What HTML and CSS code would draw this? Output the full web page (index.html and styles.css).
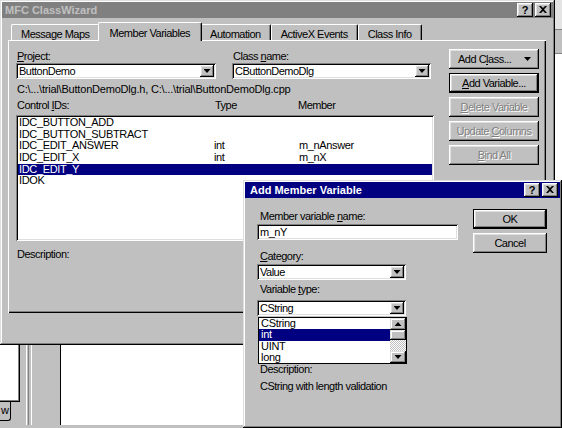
FILE: index.html
```html
<!DOCTYPE html>
<html>
<head>
<meta charset="utf-8">
<title>MFC ClassWizard</title>
<link rel="stylesheet" href="styles.css">
</head>
<body>
<div class="desktop">
  <div class="bg-right">
    <div class="bgr-top"></div>
    <div class="bgr-mid"></div>
    <div class="bgr-low"></div>
  </div>

  <div class="bg-left">
    <div class="bgl-side">
      <div class="bgl-pane"></div>
      <div class="bgl-tab">w</div>
    </div>
    <div class="bgl-rails"></div>
    <div class="bgl-canvas"></div>
  </div>

  <section class="win main-win">
    <header class="titlebar inactive">
      <span class="title">MFC ClassWizard</span>
      <span class="caption-btns">
        <span class="cbtn">?</span>
        <span class="cbtn"><svg width="8" height="7" viewBox="0 0 8 7"><path d="M0 0h2l2 2 2-2h2L5 3.5 8 7H6L4 5 2 7H0l3-3.5z" fill="#000"/></svg></span>
      </span>
    </header>
    <div class="main-body">
      <nav class="tabs">
        <span class="tab">Message Maps</span>
        <span class="tab active">Member Variables</span>
        <span class="tab">Automation</span>
        <span class="tab">ActiveX Events</span>
        <span class="tab">Class Info</span>
      </nav>
      <div class="tab-panel">
        <div class="mv-left">
          <div class="combo-row">
            <div class="field">
              <span class="lbl"><u>P</u>roject:</span>
              <div class="combo"><span class="combo-text">ButtonDemo</span><span class="drop-btn"><span class="tri-down"></span></span></div>
            </div>
            <div class="field">
              <span class="lbl">Class <u>n</u>ame:</span>
              <div class="combo"><span class="combo-text">CButtonDemoDlg</span><span class="drop-btn"><span class="tri-down"></span></span></div>
            </div>
          </div>
          <div class="path">C:\...\trial\ButtonDemoDlg.h, C:\...\trial\ButtonDemoDlg.cpp</div>
          <div class="col-head"><span>Control <u>I</u>Ds:</span><span>Type</span><span>Member</span></div>
          <div class="listbox">
            <div class="lrow"><span>IDC_BUTTON_ADD</span><span></span><span></span></div>
            <div class="lrow"><span>IDC_BUTTON_SUBTRACT</span><span></span><span></span></div>
            <div class="lrow"><span>IDC_EDIT_ANSWER</span><span>int</span><span>m_nAnswer</span></div>
            <div class="lrow"><span>IDC_EDIT_X</span><span>int</span><span>m_nX</span></div>
            <div class="lrow sel"><span>IDC_EDIT_Y</span><span></span><span></span></div>
            <div class="lrow"><span>IDOK</span><span></span><span></span></div>
          </div>
          <div class="lbl desc-lbl">Description:</div>
        </div>
        <div class="btn-col">
          <div class="btn split"><span>Add C<u>l</u>ass...</span><span class="tri-down"></span></div>
          <div class="btn default"><span><u>A</u>dd Variable...</span></div>
          <div class="btn disabled"><span><u>D</u>elete Variable</span></div>
          <div class="btn disabled"><span>Update <u>C</u>olumns</span></div>
          <div class="btn disabled"><span><u>B</u>ind All</span></div>
        </div>
      </div>
    </div>
  </section>

  <section class="win dlg-win">
    <header class="titlebar">
      <span class="title">Add Member Variable</span>
      <span class="caption-btns">
        <span class="cbtn">?</span>
        <span class="cbtn"><svg width="8" height="7" viewBox="0 0 8 7"><path d="M0 0h2l2 2 2-2h2L5 3.5 8 7H6L4 5 2 7H0l3-3.5z" fill="#000"/></svg></span>
      </span>
    </header>
    <div class="dlg-body">
      <div class="dlg-left">
        <span class="dlbl first">Member variable <u>n</u>ame:</span>
        <div class="edit">m_nY</div>
        <span class="dlbl cat"><u>C</u>ategory:</span>
        <div class="combo small cat-combo"><span class="combo-text">Value</span><span class="drop-btn"><span class="tri-down"></span></span></div>
        <span class="dlbl vt">Variable <u>t</u>ype:</span>
        <div class="combo small type-combo">
          <span class="combo-text">CString</span><span class="drop-btn"><span class="tri-down"></span></span>
          <div class="dropdown">
            <div class="dd-items">
              <div class="dd-item">CString</div>
              <div class="dd-item sel">int</div>
              <div class="dd-item">UINT</div>
              <div class="dd-item">long</div>
            </div>
            <div class="scrollbar">
              <div class="sb-btn"><span class="tri-up"></span></div>
              <div class="sb-thumb"></div>
              <div class="sb-track"></div>
              <div class="sb-btn"><span class="tri-down"></span></div>
            </div>
          </div>
        </div>
        <span class="dlbl desc2">Description:</span>
        <span class="dlbl desc-text">CString with length validation</span>
      </div>
      <div class="dlg-right">
        <div class="btn default">OK</div>
        <div class="btn">Cancel</div>
      </div>
    </div>
  </section>
</div>
</body>
</html>
```

FILE: styles.css
```css
* { box-sizing: border-box; }
html, body { margin: 0; padding: 0; }
body {
  font-family: "Liberation Sans", Arial, sans-serif;
  font-size: 11px;
  letter-spacing: -0.5px;
  color: #000;
  background: #c0c0c0;
}
u { text-decoration: underline; text-underline-offset: 1px; }

.desktop {
  position: relative;
  width: 562px;
  height: 428px;
  overflow: hidden;
  background: #c0c0c0;
}

/* background windows */
.bg-right {
  position: absolute;
  left: 555px;
  top: 0;
  width: 7px;
  height: 182px;
  display: flex;
  flex-direction: column;
}
.bgr-top { height: 30px; background: #e4e4e4; border-bottom: 1px solid #808080; }
.bgr-mid { height: 24px; background: #c0c0c0; border-bottom: 1px solid #808080; }
.bgr-low { flex: 1; background: #fff; }

.bg-left {
  position: absolute;
  left: 0;
  top: 345px;
  width: 243px;
  height: 83px;
  display: flex;
  background: #c0c0c0;
}
.bgl-side { width: 20px; display: flex; flex-direction: column; }
.bgl-pane {
  height: 57px;
  background: #fff;
  border-right: 1px solid #000;
  border-bottom: 1px solid #000;
  box-shadow: inset -1px -1px #808080;
}
.bgl-tab {
  width: 11px;
  height: 19px;
  border-right: 1px solid #000;
  border-bottom: 1px solid #000;
  border-bottom-right-radius: 3px;
  line-height: 16px;
  padding-left: 1px;
  overflow: hidden;
}
.bgl-rails {
  width: 40px;
  height: 80px;
  background: linear-gradient(to right,
    #c0c0c0 0 6px, #fff 6px 7px, #c0c0c0 7px 8px, #808080 8px 9px,
    #c0c0c0 9px 11px, #fff 11px 12px, #c0c0c0 12px);
}
.bgl-canvas {
  flex: 1;
  height: 80px;
  background: #fff;
  border-left: 1px solid #000;
}

/* windows */
.win {
  position: absolute;
  padding: 2px;
  background: #c0c0c0;
  box-shadow: inset -1px -1px #000, inset 1px 1px #dfdfdf, inset -2px -2px #808080, inset 2px 2px #fff;
  display: flex;
  flex-direction: column;
}
.main-win { left: 0; top: 0; width: 555px; height: 345px; }
.dlg-win { left: 243px; top: 180px; width: 319px; height: 248px; }

.titlebar {
  height: 16px;
  flex: none;
  display: flex;
  align-items: center;
  justify-content: space-between;
  padding: 0 2px 0 3px;
  background: #000080;
  color: #fff;
}
.dlg-win .titlebar { padding-left: 5px; }
.titlebar.inactive { background: #808080; color: #c0c0c0; }
.title { font-weight: bold; letter-spacing: 0; line-height: 16px; white-space: nowrap; }
.caption-btns { display: flex; gap: 2px; }
.cbtn {
  width: 16px;
  height: 14px;
  background: #c0c0c0;
  color: #000;
  box-shadow: inset -1px -1px #000, inset 1px 1px #fff, inset -2px -2px #808080, inset 2px 2px #dfdfdf;
  display: flex;
  align-items: center;
  justify-content: center;
  font-weight: bold;
  letter-spacing: 0;
  line-height: 12px;
  padding-bottom: 1px;
}

/* main window body */
.main-body { padding: 4px 7px 0 6px; }
.tabs {
  display: flex;
  align-items: flex-end;
  height: 18px;
  padding-left: 3px;
  position: relative;
  z-index: 1;
}
.tab {
  height: 16px;
  padding: 3px 9px 0;
  line-height: 12px;
  border: 1px solid #fff;
  border-bottom: 0;
  border-right-color: #000;
  border-radius: 2px 2px 0 0;
  box-shadow: inset -1px 0 #808080;
  white-space: nowrap;
  background: #c0c0c0;
}
.tab.active {
  height: 19px;
  margin: 0 -2px -1px;
  padding: 4px 11px 0;
  position: relative;
  z-index: 2;
}

.tab-panel {
  height: 273px;
  display: grid;
  grid-template-columns: 418px 90px;
  column-gap: 15px;
  align-items: start;
  padding: 9px 7px 0 8px;
  box-shadow: inset 1px 1px #fff, inset -1px -1px #000, inset -2px -2px #808080;
}

.lbl { display: block; line-height: 14px; padding-left: 1px; white-space: nowrap; }
.combo-row { display: grid; grid-template-columns: 200px 199px; column-gap: 16px; }

.combo {
  height: 16px;
  background: #fff;
  box-shadow: inset 1px 1px #808080, inset -1px -1px #fff, inset 2px 2px #000, inset -2px -2px #dfdfdf;
  display: flex;
  align-items: center;
  padding: 2px;
  position: relative;
}
.combo-text { flex: 1; padding-left: 1px; line-height: 12px; white-space: nowrap; }
.drop-btn {
  width: 14px;
  height: 12px;
  background: #c0c0c0;
  box-shadow: inset -1px -1px #000, inset 1px 1px #fff, inset -2px -2px #808080, inset 2px 2px #dfdfdf;
  display: flex;
  align-items: center;
  justify-content: center;
}
.tri-down {
  display: block;
  width: 7px;
  height: 4px;
  background: #000;
  clip-path: polygon(0 0, 100% 0, 50% 100%);
}
.tri-up {
  display: block;
  width: 7px;
  height: 4px;
  background: #000;
  clip-path: polygon(50% 0, 100% 100%, 0 100%);
}

.path { margin-top: 4px; line-height: 13px; padding-left: 1px; white-space: nowrap; letter-spacing: -0.2px; }
.col-head {
  display: grid;
  grid-template-columns: 198px 83px 1fr;
  margin-top: 3px;
  line-height: 13px;
  padding-left: 1px;
}
.listbox {
  margin-top: 3px;
  height: 126px;
  background: #fff;
  box-shadow: inset 1px 1px #808080, inset -1px -1px #fff, inset 2px 2px #000, inset -2px -2px #dfdfdf;
  padding: 2px;
}
.lrow {
  display: grid;
  grid-template-columns: 195px 85px 1fr;
  height: 11.7px;
  line-height: 11.7px;
  padding-left: 1px;
  white-space: nowrap;
  letter-spacing: -0.35px;
}
.lrow.sel { background: #000080; color: #fff; }
.desc-lbl { margin-top: 6px; }

.btn-col { display: flex; flex-direction: column; gap: 4px; }
.btn {
  height: 20px;
  background: #c0c0c0;
  box-shadow: inset -1px -1px #000, inset 1px 1px #fff, inset -2px -2px #808080, inset 2px 2px #dfdfdf;
  display: flex;
  align-items: center;
  justify-content: center;
  white-space: nowrap;
  line-height: 12px;
}
.btn.default {
  box-shadow: inset 0 0 0 1px #000, inset -2px -2px #000, inset 2px 2px #fff, inset -3px -3px #808080, inset 3px 3px #dfdfdf;
}
.btn.disabled { color: #808080; text-shadow: 1px 1px #fff; }
.btn.split { justify-content: space-between; padding: 0 8px 0 9px; }

/* dialog */
.dlg-body {
  display: grid;
  grid-template-columns: 201px 74px;
  column-gap: 15px;
  align-items: start;
  padding-left: 12px;
}
.dlg-left { display: flex; flex-direction: column; }
.dlbl { display: block; line-height: 13px; padding-left: 3px; white-space: nowrap; }
.dlbl.first { margin-top: 12px; }
.edit {
  margin-top: 1px;
  height: 16px;
  background: #fff;
  box-shadow: inset 1px 1px #808080, inset -1px -1px #fff, inset 2px 2px #000, inset -2px -2px #dfdfdf;
  padding: 2px 2px 2px 3px;
  line-height: 12px;
}
.dlbl.cat { margin-top: 10px; }
.combo.small { width: 149px; }
.cat-combo { margin-top: 1px; }
.dlbl.vt { margin-top: 3px; }
.type-combo { margin-top: 4px; z-index: 3; }
.dropdown {
  position: absolute;
  left: 1px;
  top: calc(100% + 1px);
  width: 149px;
  height: 47px;
  background: #fff;
  border: 1px solid #000;
  display: flex;
}
.dd-items { flex: 1; }
.dd-item { height: 11.25px; line-height: 11.25px; padding-left: 2px; letter-spacing: -0.3px; }
.dd-item.sel { background: #000080; color: #fff; }
.scrollbar { width: 16px; display: flex; flex-direction: column; }
.sb-btn {
  height: 12px;
  background: #c0c0c0;
  box-shadow: inset -1px -1px #000, inset 1px 1px #dfdfdf, inset -2px -2px #808080, inset 2px 2px #fff;
  display: flex;
  align-items: center;
  justify-content: center;
}
.sb-thumb {
  height: 10px;
  background: #c0c0c0;
  box-shadow: inset -1px -1px #000, inset 1px 1px #dfdfdf, inset -2px -2px #808080, inset 2px 2px #fff;
}
.sb-track {
  flex: 1;
  background: repeating-conic-gradient(#fff 0 25%, #c0c0c0 0 50%) 0 0 / 2px 2px;
}
.dlbl.desc2 { margin-top: 47px; }
.dlbl.desc-text { margin-top: 4px; }

.dlg-right { display: flex; flex-direction: column; gap: 4px; margin-top: 11px; }
```
